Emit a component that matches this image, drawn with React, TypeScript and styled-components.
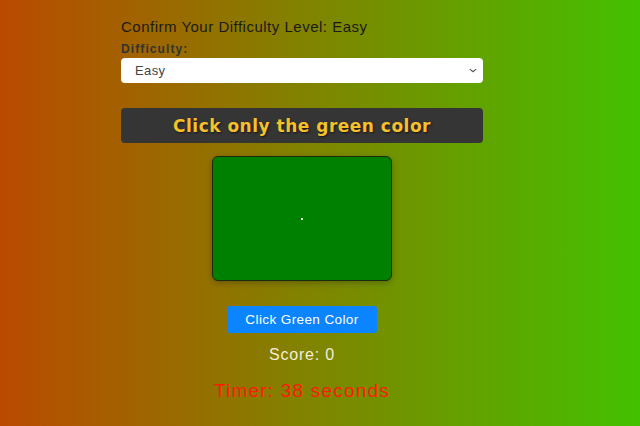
import React, { useState } from "react";
import styled, { createGlobalStyle } from "styled-components";

const GlobalStyle = createGlobalStyle`
  html, body {
    margin: 0;
    padding: 0;
  }
  body {
    font-family: "Liberation Sans", Arial, sans-serif;
  }
`;

export default function App() {
  const [level, setLevel] = useState("Easy");
  const [score] = useState(0);
  const [seconds] = useState(38);

  return (
    <Page>
      <GlobalStyle />
      <Panel>
        <Heading>Confirm Your Difficulty Level: {level}</Heading>
        <Label htmlFor="difficulty">Difficulty:</Label>
        <SelectWrap>
          <Select
            id="difficulty"
            value={level}
            onChange={(e) => setLevel(e.target.value)}
          >
            <option>Easy</option>
            <option>Medium</option>
            <option>Hard</option>
          </Select>
          <Chevron viewBox="0 0 10 6" aria-hidden>
            <path d="M1 1.2 L5 4.6 L9 1.2" />
          </Chevron>
        </SelectWrap>
        <Banner>Click only the green color</Banner>
        <ColorBox>
          <Dot />
        </ColorBox>
        <ActionButton>Click Green Color</ActionButton>
        <Score>Score: {score}</Score>
        <Timer>Timer: {seconds} seconds</Timer>
      </Panel>
    </Page>
  );
}

const Page = styled.div`
  width: 640px;
  height: 426px;
  box-sizing: border-box;
  padding-right: 36px;
  overflow: hidden;
  background: linear-gradient(to right, #ba4a00, #43c100);
  display: flex;
  justify-content: center;
`;

const Panel = styled.div`
  width: 362px;
  display: flex;
  flex-direction: column;
  align-items: center;
  padding-top: 18px;
`;

const Heading = styled.div`
  align-self: stretch;
  font-size: 15px;
  letter-spacing: 0.5px;
  color: #1a1a1a;
  line-height: 18px;
`;

const Label = styled.label`
  align-self: stretch;
  margin-top: 6px;
  font-size: 12px;
  font-weight: bold;
  letter-spacing: 1.1px;
  color: #333;
  line-height: 14px;
`;

const SelectWrap = styled.div`
  position: relative;
  align-self: stretch;
  margin-top: 2px;
`;

const Select = styled.select`
  width: 100%;
  height: 25px;
  appearance: none;
  border: none;
  border-radius: 4px;
  background: #fff;
  padding: 0 14px;
  font-family: "Liberation Sans", Arial, sans-serif;
  font-size: 13px;
  letter-spacing: 0.4px;
  color: #444;
  outline: none;
`;

const Chevron = styled.svg`
  position: absolute;
  right: 6px;
  top: 10px;
  width: 8px;
  height: 5px;
  fill: none;
  stroke: #555;
  stroke-width: 1.4;
  pointer-events: none;
`;

const Banner = styled.div`
  align-self: stretch;
  margin-top: 25px;
  height: 35px;
  border-radius: 4px;
  background: #353535;
  display: flex;
  align-items: center;
  justify-content: center;
  font-family: "DejaVu Sans", sans-serif;
  font-weight: bold;
  font-size: 17px;
  letter-spacing: 0.5px;
  color: #f5c12a;
  text-shadow: 1px 1px 2px rgba(0, 0, 0, 0.6);
`;

const ColorBox = styled.div`
  margin-top: 13px;
  width: 178px;
  height: 123px;
  background: #008000;
  border: 1.5px solid #1a2a10;
  border-radius: 6px;
  box-shadow: 0 2px 6px rgba(0, 0, 0, 0.25);
  display: flex;
  align-items: center;
  justify-content: center;
`;

const Dot = styled.span`
  width: 2px;
  height: 2px;
  background: #d8f8d8;
`;

const ActionButton = styled.button`
  margin-top: 25px;
  width: 150px;
  height: 27px;
  border: none;
  border-radius: 3px;
  background: #0a84ff;
  color: #fff;
  font-family: "Liberation Sans", Arial, sans-serif;
  font-size: 13.5px;
  letter-spacing: 0.4px;
  cursor: pointer;
`;

const Score = styled.div`
  margin-top: 13px;
  font-size: 16px;
  letter-spacing: 0.8px;
  color: #f2eed8;
  line-height: 18px;
`;

const Timer = styled.div`
  margin-top: 16px;
  font-size: 19px;
  letter-spacing: 1.2px;
  color: #ff1a00;
  line-height: 22px;
`;
